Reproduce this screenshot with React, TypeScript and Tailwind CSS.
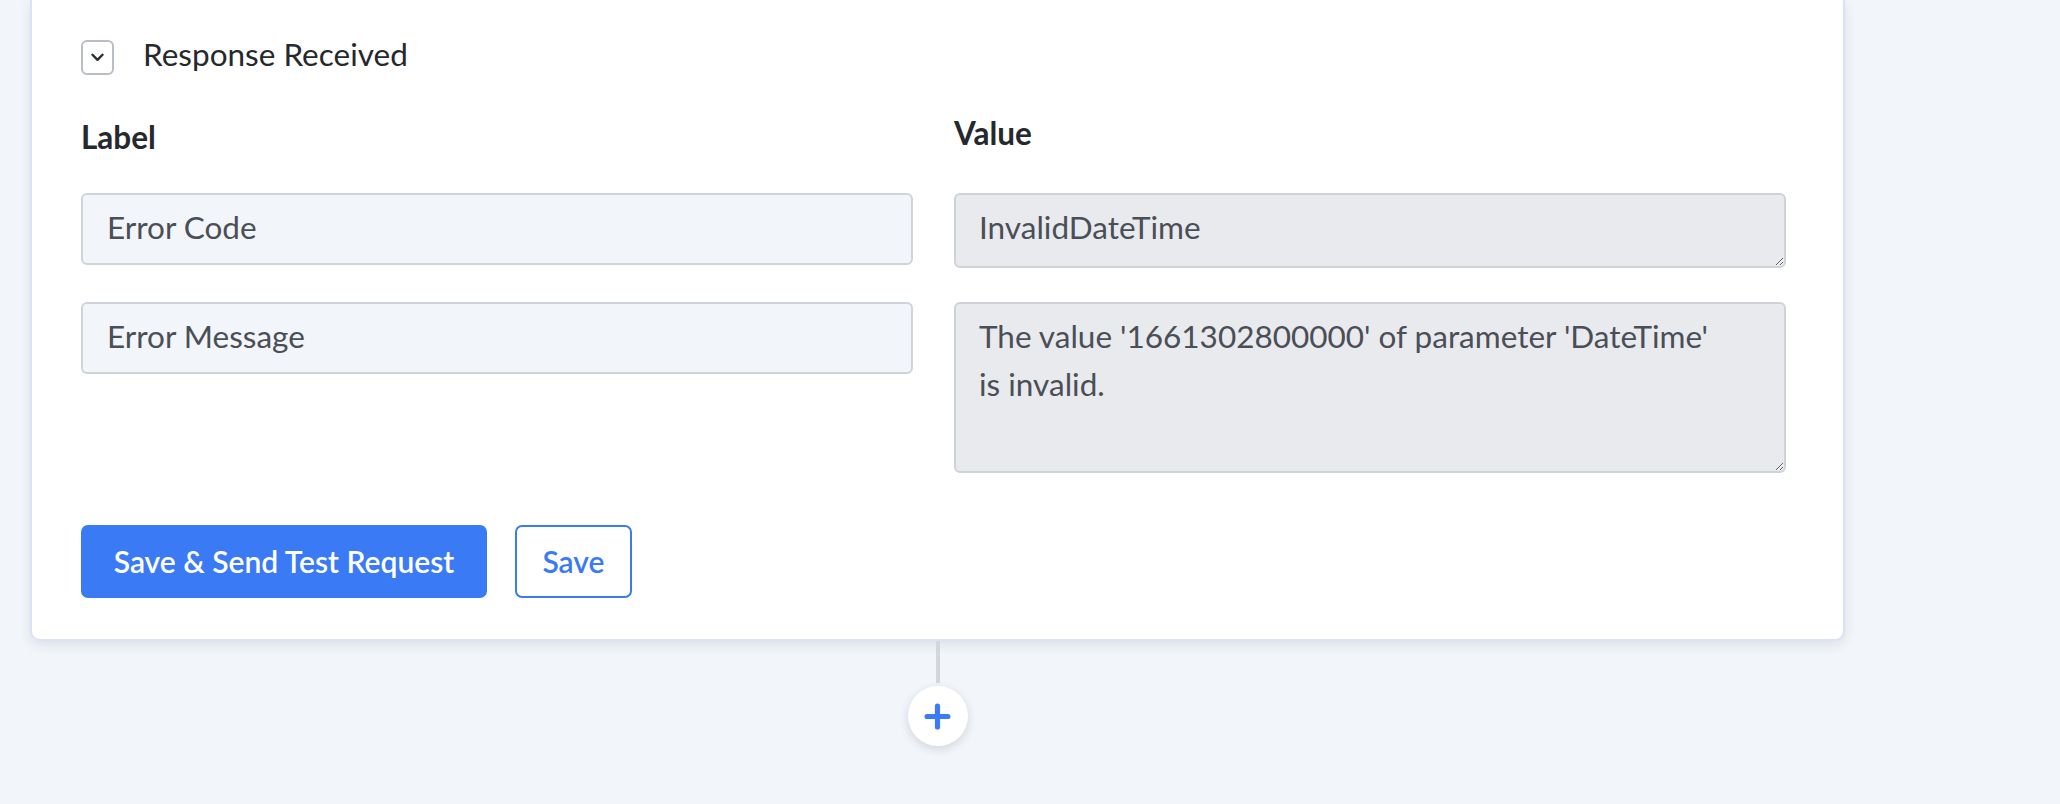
// Response step card: collapsible header, label/value grid and the two actions,
// followed by the connector and the "add step" button below the card.

const rows = [
  { label: "Error Code", value: "InvalidDateTime", tall: false },
  {
    label: "Error Message",
    value: "The value '1661302800000' of parameter 'DateTime' is invalid.",
    tall: true,
  },
];

function ChevronBox() {
  return (
    <span className="flex h-[35px] w-[33px] items-center justify-center rounded-[6px] border-2 border-[#b9bec6] bg-white">
      <svg viewBox="0 0 18 12" className="h-[11px] w-[17px]" fill="none" stroke="#2a2d33" strokeWidth={2.6} strokeLinecap="round" strokeLinejoin="round">
        <path d="M3.5 3l5.5 5.5 5.5-5.5" />
      </svg>
    </span>
  );
}

export default function App() {
  return (
    <div className="flex h-[804px] w-full flex-col bg-[#f2f5f9] font-['Lato',sans-serif]">
      <div className="ml-[30px] w-[1815px] rounded-b-[10px] border-2 border-t-0 border-[#dbe2f8] bg-white pb-[41px] pl-[49px] pt-[40px] shadow-[0_4px_12px_rgba(40,50,80,0.10)]">
        <div className="flex h-[35px] items-center gap-[29px]">
          <ChevronBox />
          <span className="pb-[6px] text-[31.5px] leading-none text-[#25282d]">Response Received</span>
        </div>

        <div className="mt-[41px] grid grid-cols-[832px_832px] gap-x-[41px] items-start">
          <div className="pt-[4px] text-[31.5px] font-bold leading-[34px] text-[#25282d]">Label</div>
          <div className="text-[31.5px] font-bold leading-[34px] text-[#25282d]">Value</div>
        </div>

        <div className="mt-[39px] grid grid-cols-[832px_832px] gap-x-[41px] gap-y-[34px] items-start">
          {rows.map((r, i) => (
            <div key={i} className="contents">
              <input
                readOnly
                value={r.label}
                className="h-[72px] w-full rounded-[6px] border-2 border-[#cfd4da] bg-[#f2f5f9] px-[24px] pb-[4px] text-[31.5px] text-[#4a4f57] outline-none"
              />
              <textarea
                readOnly
                value={r.value}
                className={`w-full rounded-[6px] border-2 border-[#cfd3d8] bg-[#e9eaee] pl-[23px] pr-[52px] pt-[8px] pb-[9px] text-[31.5px] leading-[48px] text-[#4a4f57] outline-none ${r.tall ? "h-[171px]" : "h-[75px]"}`}
              />
            </div>
          ))}
        </div>

        <div className="mt-[52px] flex gap-[28px]">
          <button className="h-[73px] w-[406px] rounded-[7px] bg-[#3a7bf5] text-[30px] font-semibold text-white">
            Save &amp; Send Test Request
          </button>
          <button className="h-[73px] w-[117px] rounded-[7px] border-2 border-[#3a7bf5] bg-white text-[30px] font-semibold text-[#3a7bf5]">
            Save
          </button>
        </div>
      </div>

      <div className="ml-[30px] flex w-[1815px] flex-col items-center">
        <div className="h-[42px] w-[4px] bg-[#d3d6da]" />
        <div className="mt-[3px] flex h-[60px] w-[60px] items-center justify-center rounded-full bg-white shadow-[0_3px_10px_rgba(30,40,60,0.15)]">
          <svg viewBox="0 0 26 26" className="h-[27px] w-[27px]" fill="none" stroke="#3b7cf6" strokeWidth={5} strokeLinecap="round">
            <path d="M13 3v20M3 13h20" />
          </svg>
        </div>
      </div>
    </div>
  );
}
